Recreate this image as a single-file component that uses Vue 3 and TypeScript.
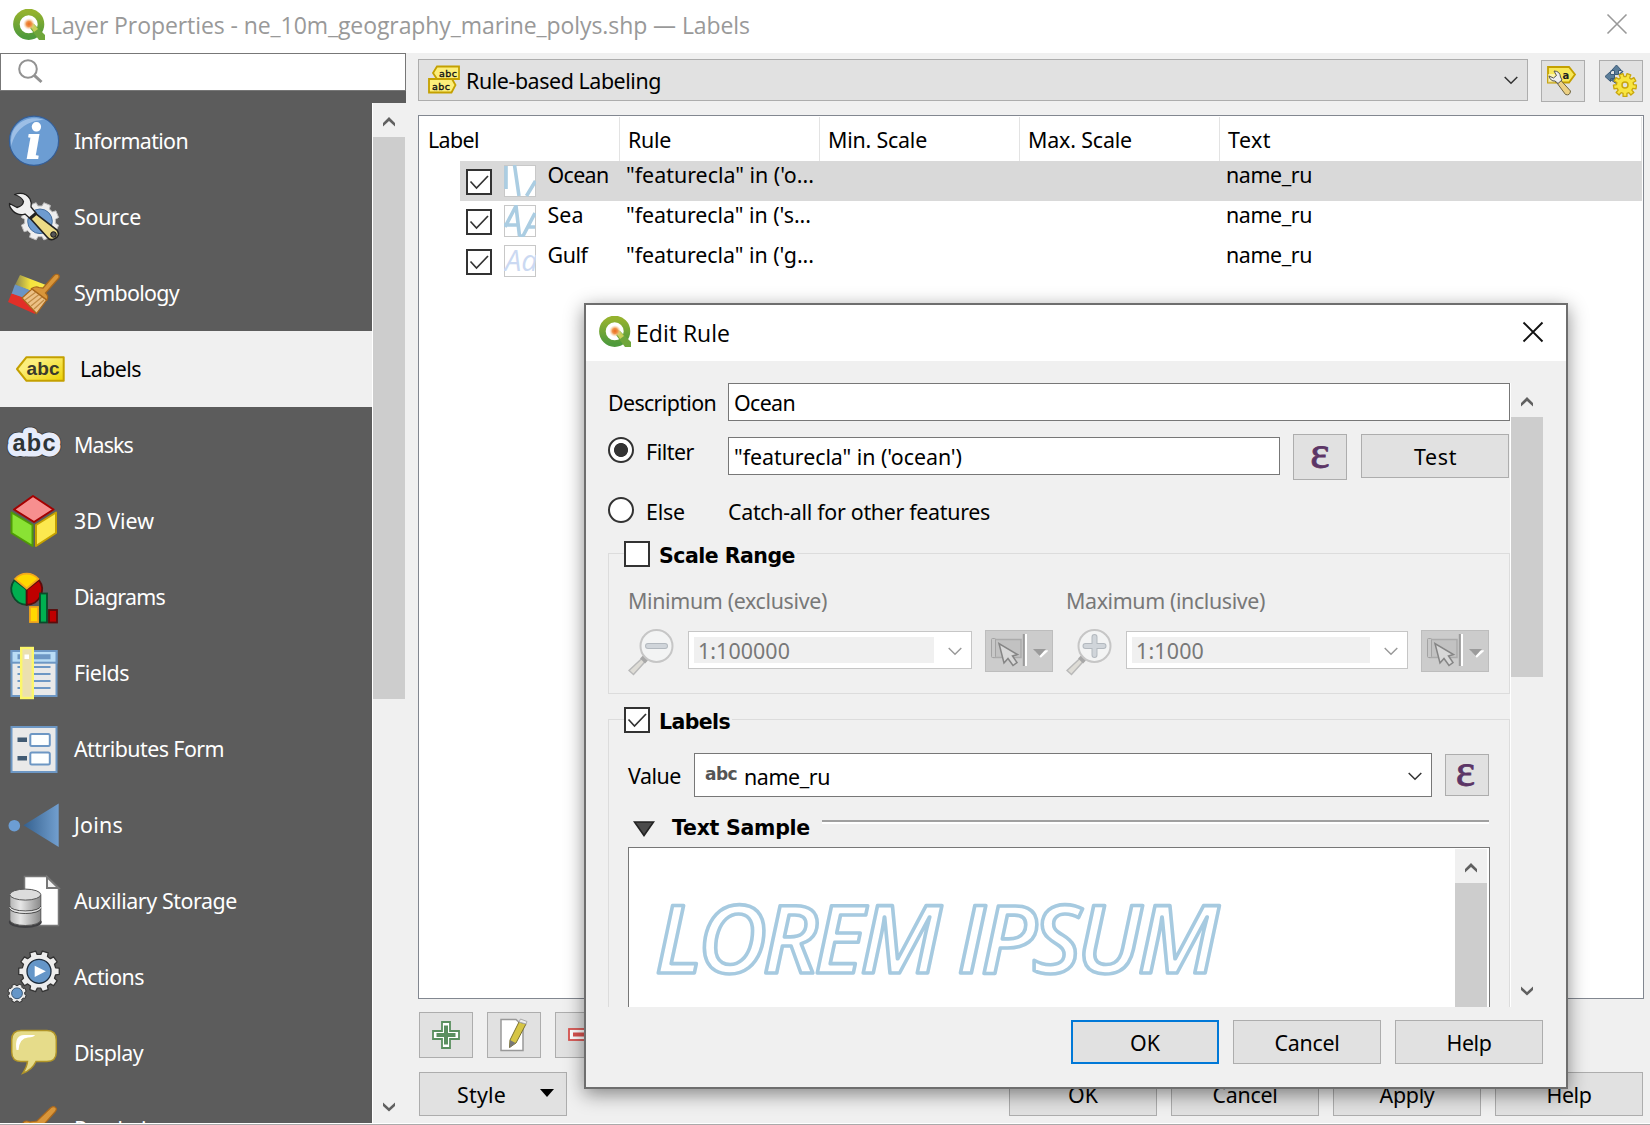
<script setup lang="ts">
import type { Directive } from 'vue'

// Tightens letter spacing so a caption occupies its nominal width.
const vFit: Directive<HTMLElement, number> = {
  mounted(el, { value }) {
    const n = (el.textContent ?? '').trim().length
    if (!n) return
    const natural = el.getBoundingClientRect().width
    el.style.letterSpacing = `${((value - natural) / n).toFixed(3)}px`
  },
}

function gear(cx: number, cy: number, ro: number, ri: number, teeth: number): string {
  const pts: string[] = []
  const step = (Math.PI * 2) / teeth
  for (let i = 0; i < teeth; i++) {
    const a = i * step - Math.PI / 2 + step / 2
    const put = (r: number, d: number) =>
      pts.push(`${(cx + r * Math.cos(a + d * step)).toFixed(2)} ${(cy + r * Math.sin(a + d * step)).toFixed(2)}`)
    put(ri, -0.33)
    put(ro, -0.24)
    put(ro, 0.24)
    put(ri, 0.33)
  }
  return `M${pts.join('L')}Z`
}

interface NavItem { id: string; label: string; w: number }
const nav: NavItem[] = [
  { id: 'info', label: 'Information', w: 114 },
  { id: 'source', label: 'Source', w: 67 },
  { id: 'symbology', label: 'Symbology', w: 105 },
  { id: 'labels', label: 'Labels', w: 61 },
  { id: 'masks', label: 'Masks', w: 59 },
  { id: 'view3d', label: '3D View', w: 80 },
  { id: 'diagrams', label: 'Diagrams', w: 91 },
  { id: 'fields', label: 'Fields', w: 55 },
  { id: 'form', label: 'Attributes Form', w: 150 },
  { id: 'joins', label: 'Joins', w: 49 },
  { id: 'aux', label: 'Auxiliary Storage', w: 163 },
  { id: 'actions', label: 'Actions', w: 70 },
  { id: 'display', label: 'Display', w: 69 },
  { id: 'rendering', label: 'Rendering', w: 96 },
]

const rules = [
  { name: 'Ocean', w: 61, rule: '"featurecla" in (\'o...', rw: 188, sel: true },
  { name: 'Sea', w: 36, rule: '"featurecla" in (\'s...', rw: 185, sel: false },
  { name: 'Gulf', w: 40, rule: '"featurecla" in (\'g...', rw: 188, sel: false },
]

const scales = [
  { title: 'Minimum (exclusive)', tw: 199, value: '1:100000', vw: 92, plus: false },
  { title: 'Maximum (inclusive)', tw: 199, value: '1:1000', vw: 68, plus: true },
]
</script>

<template>
  <div class="app">
    <header class="titlebar">
      <svg class="logo" width="32" height="32" viewBox="0 0 32 32">
        <defs>
          <linearGradient id="qg" x1="0" y1="0" x2="0" y2="1"><stop offset="0" stop-color="#94b22e" /><stop offset="1" stop-color="#4f9a3c" /></linearGradient>
          <radialGradient id="qo"><stop offset="0" stop-color="#ea6a1c" /><stop offset=".45" stop-color="#f0924a" /><stop offset="1" stop-color="#f9dfb4" stop-opacity="0" /></radialGradient>
        </defs>
        <circle cx="15.700" cy="15.300" r="12.300" fill="none" stroke="url(#qg)" stroke-width="6.600" />
        <path d="M17 19L21 15L32 26V31H26Z" fill="#6fa63a" />
        <path d="M16 15L20 14L25 20L21 23Z" fill="#c9cf58" />
        <circle cx="16" cy="15" r="6" fill="url(#qo)" />
      </svg>
      <span v-fit="700" class="wintitle">Layer Properties - ne_10m_geography_marine_polys.shp — Labels</span>
      <svg class="winclose" width="22" height="22" viewBox="0 0 22 22"><path d="M1.500 1.500L20.500 20.500M20.500 1.500L1.500 20.500" stroke="#999" stroke-width="1.600" /></svg>
    </header>

    <div class="body">
      <aside class="side">
        <div class="search">
          <svg width="28" height="28" viewBox="0 0 28 28" fill="none" stroke="#929292"><circle cx="11" cy="11" r="8.800" stroke-width="2" /><path d="M17.300 17.300L24.500 24" stroke-width="3" /></svg>
        </div>
        <div class="navwrap">
          <nav class="nav">
            <div v-for="it in nav" :key="it.id" class="item" :class="{ on: it.id === 'labels' }">
              <svg class="ico" width="68" height="76" viewBox="0 0 68 76">
                <g v-if="it.id === 'info'">
                  <circle cx="34" cy="37.700" r="24.600" fill="#6c9dd3" stroke="#355f98" stroke-width="1.200" />
                  <path d="M11.500 43C8 22 27 11 44 17C30 17 15 25 11.500 43Z" fill="#9dbfe6" />
                  <text x="33.500" y="54.500" text-anchor="middle" font-family="Liberation Serif" font-weight="bold" font-style="italic" font-size="50" fill="#fff" stroke="#fff" stroke-width="1.800">i</text>
                </g>
                <g v-else-if="it.id === 'source'">
                  <path :d="gear(40, 42.3, 19, 15.5, 8)" fill="#eee" stroke="#bbb" stroke-width="1" stroke-linejoin="round" />
                  <circle cx="40" cy="42.300" r="12.300" fill="#6e9bcf" stroke="#456f9f" />
                  <path d="M30 39L35 34L57 51Q61 57 54 60Q50 62 47 58Z" fill="#ecdb86" stroke="#222" stroke-width="1.600" />
                  <circle cx="53.500" cy="55.500" r="2.800" fill="#555" stroke="#111" />
                  <path d="M14.500 15.500Q25 12 30 20Q32 24 31 28L36 34L30 39.500L25 35Q18 37 13 32Q9 28 9.500 24.500L17 28.500Q23 27 23.500 22.500Q22 18 14.500 15.500Z" fill="#f0f0f0" stroke="#222" stroke-width="1.300" stroke-linejoin="round" />
                  <path d="M30 39.500L36.500 34" stroke="#222" stroke-width="3" />
                </g>
                <g v-else-if="it.id === 'symbology'">
                  <defs><linearGradient id="fy"><stop offset="0" stop-color="#8a8550" /><stop offset=".5" stop-color="#f6e43c" /><stop offset="1" stop-color="#f6ea50" /></linearGradient></defs>
                  <path d="M20 20L46 30L42 40L15 30Z" fill="url(#fy)" />
                  <path d="M15 29.500L40 39L36 48L11.500 39Z" fill="#6a94c4" />
                  <path d="M11.500 38.500L36 47L35 59L8 47Z" fill="#e22f28" />
                  <path d="M22 43L32 34L46.500 45L36.500 58.500Z" fill="#ecc186" stroke="#a8671c" stroke-width="1.200" />
                  <path d="M25 45L36 37M28 48L39 39.500M31 51L42 42M34 54L44 45" stroke="#c08b45" stroke-width="1.200" />
                  <path d="M31.500 33.500Q36 31 39 32.500L43 33L54 20.500Q57 18 59 20.500Q60 22.500 57 25L45.500 38Q49 41 47 45Z" fill="#d9963a" stroke="#a8671c" stroke-width="1.200" />
                </g>
                <g v-else-if="it.id === 'labels'">
                  <defs><linearGradient id="lt" x1="0" y1="0" x2="1" y2="1"><stop offset=".3" stop-color="#fcef7c" /><stop offset="1" stop-color="#edd200" /></linearGradient></defs>
                  <path d="M17 38L26.500 26.200H63.700V49.800H26.500Z" fill="url(#lt)" stroke="#c4a000" stroke-width="2" stroke-linejoin="round" />
                  <text x="26.500" y="43.700" font-family="Liberation Sans" font-weight="bold" font-size="19" textLength="33" fill="#3a3a2c">abc</text>
                </g>
                <g v-else-if="it.id === 'masks'" font-family="Liberation Sans" font-weight="bold" font-size="23.500" stroke-linejoin="round">
                  <text x="12.500" y="43.500" textLength="43" fill="#2a3440" stroke="#333" stroke-width="12.500">abc</text>
                  <text x="12.500" y="43.500" textLength="43" fill="#e6ecfb" stroke="#e6ecfb" stroke-width="11">abc</text>
                  <text x="12.500" y="43.500" textLength="43" fill="#2d3436">abc</text>
                </g>
                <g v-else-if="it.id === 'view3d'" stroke-width="2" stroke-linejoin="round">
                  <path d="M33 13L53.500 26.500L34 39L14 26.500Z" fill="#f78f8f" stroke="#a40000" />
                  <path d="M11.500 29.500L32.500 42V63L11.500 50Z" fill="#8ae234" stroke="#4e9a06" />
                  <path d="M56 29.500L36 42V63L56 50Z" fill="#fce94f" stroke="#c4a000" />
                </g>
                <g v-else-if="it.id === 'diagrams'" stroke-width="1.800">
                  <path d="M26.700 30.500L14.500 21A15.500 15.500 0 0 0 26.700 45.800Z" fill="#00b050" stroke="#0a4a2a" />
                  <path d="M26.700 30.500L38.900 21A15.500 15.500 0 0 1 26.700 45.800Z" fill="#c00000" stroke="#5a0c0c" />
                  <path d="M26.700 29.500L15 20A15.500 15.500 0 0 1 38.400 20Z" fill="#ffd800" stroke="#f3a71c" />
                  <rect x="30" y="48" width="8" height="15" fill="#ffd800" stroke="#f3a71c" />
                  <rect x="40" y="34.500" width="7" height="29" fill="#00b050" stroke="#0a4a2a" />
                  <rect x="49" y="51" width="8" height="12.500" fill="#c00000" stroke="#5a0c0c" />
                </g>
                <g v-else-if="it.id === 'fields'">
                  <rect x="11.500" y="16" width="45" height="45" fill="#e9e9e9" stroke="#6d97c4" stroke-width="2" />
                  <rect x="11.500" y="16" width="45" height="11.700" fill="#b9dcf5" stroke="#6d97c4" stroke-width="2" />
                  <path d="M17.500 32H50.500M17.500 39H50.500M17.500 46H50.500M17.500 53H50.500" stroke="#6d97c4" stroke-width="2" />
                  <path d="M17.500 21.800H50.500" stroke="#6d97c4" stroke-width="5" />
                  <rect x="21.200" y="13" width="11.600" height="50" fill="#ebe0b0" stroke="#fcf769" stroke-width="2.400" />
                  <rect x="24.500" y="19.500" width="4.500" height="4.500" fill="#fff" />
                </g>
                <g v-else-if="it.id === 'form'">
                  <rect x="11.500" y="16" width="45" height="45" fill="#e9e9e9" stroke="#6d97c4" stroke-width="2" />
                  <path d="M17.500 28.700H27M17.500 47.300H27" stroke="#415a72" stroke-width="4.500" />
                  <rect x="30.300" y="23" width="19.500" height="12" rx="1.500" fill="#fdffff" stroke="#6d97c4" stroke-width="2" />
                  <rect x="30.300" y="41.500" width="19.500" height="12" rx="1.500" fill="#fdffff" stroke="#6d97c4" stroke-width="2" />
                </g>
                <g v-else-if="it.id === 'joins'">
                  <defs><linearGradient id="jt"><stop offset="0" stop-color="#35618f" /><stop offset="1" stop-color="#729fcf" /></linearGradient></defs>
                  <circle cx="14.300" cy="38.700" r="5.800" fill="#6c9dd3" />
                  <path d="M23.500 38.300L58.700 16.500V60Z" fill="url(#jt)" />
                </g>
                <g v-else-if="it.id === 'aux'">
                  <defs><linearGradient id="cy"><stop offset="0" stop-color="#b5b5b5" /><stop offset=".35" stop-color="#e6e6e6" /><stop offset="1" stop-color="#888" /></linearGradient></defs>
                  <path d="M24.500 13.500H47L58.500 25V62.500H24.500Z" fill="#fff" stroke="#777" stroke-width="1.500" />
                  <path d="M47 14V25H58.500Z" fill="#f2f2f2" stroke="#777" stroke-width="2" />
                  <ellipse cx="25.300" cy="59" rx="16.500" ry="6" fill="#3f3f42" />
                  <path d="M9.800 32V57A15.500 5.500 0 0 0 40.800 57V32Z" fill="url(#cy)" stroke="#555" />
                  <ellipse cx="25.300" cy="31.600" rx="15.500" ry="5.500" fill="#dcdcdc" stroke="#555" />
                  <path d="M9.800 43A15.500 5 0 0 0 40.800 43M9.800 45.500A15.500 5 0 0 0 40.800 45.500" fill="none" stroke="#4a4a4a" />
                  <path d="M9.800 44.200A15.500 5 0 0 0 40.800 44.200" fill="none" stroke="#eee" />
                </g>
                <g v-else-if="it.id === 'actions'" stroke-linejoin="round">
                  <path :d="gear(39, 32.3, 20.5, 17, 10)" fill="#ededed" stroke="#333" stroke-width="1.300" />
                  <circle cx="39" cy="32.300" r="12" fill="#6596c8" stroke="#1d2c3c" stroke-width="1.300" />
                  <path d="M34.700 26.800L45.800 32.300L34.700 38Z" fill="#fff" />
                  <path :d="gear(17, 54.3, 9.4, 7.8, 8)" fill="#ededed" stroke="#333" />
                  <circle cx="17" cy="54.300" r="5.400" fill="#6596c8" stroke="#1d3c5c" stroke-width=".8" />
                </g>
                <g v-else-if="it.id === 'display'">
                  <path d="M21 15.500H47Q56.300 15.500 56.300 25V37Q56.300 46.500 47 46.500H36Q32 55 22.700 58.300Q27 52 27.500 46.500H21Q11.700 46.500 11.700 37V25Q11.700 15.500 21 15.500Z" fill="#e6dc8a" stroke="#b09428" stroke-width="1.500" />
                  <path d="M16.500 35Q14 18.500 26 20H35Q34 22 28 22.500Q19.500 23 18.500 35Z" fill="#fff" />
                </g>
                <g v-else>
                  <path d="M22 34Q24 28 30 31L37 30L51 16.500Q54 14.500 56 17Q57 19 55 21L38 40Z" fill="#d9963a" stroke="#a8671c" stroke-width="1.200" />
                </g>
              </svg>
              <span v-fit="it.w" class="lbl">{{ it.label }}</span>
            </div>
          </nav>
          <div class="sb">
            <svg width="12" height="10" viewBox="0 0 12 10"><path d="M0 6L6 0L12 6V9.500L6 4L0 9.500Z" fill="#606060" /></svg>
            <div class="thumb" />
            <svg class="dn" width="12" height="10" viewBox="0 0 12 10"><path d="M0 4L6 9.500L12 4V.5L6 6L0 .5Z" fill="#606060" /></svg>
          </div>
        </div>
      </aside>

      <main class="main">
        <div class="toprow">
          <div class="mode">
            <svg width="34" height="30" viewBox="0 0 34 30">
              <path d="M5 8L9 1.500H31V14H9Z" fill="#fcee7a" stroke="#c4a000" stroke-width="1.800" />
              <path d="M1 14H24L27.500 20L23.500 27.500H1Z" fill="#fcee7a" stroke="#c4a000" stroke-width="1.800" />
              <g font-family="DejaVu Sans" font-size="9.500" fill="#111" stroke="#111" stroke-width=".35"><text x="11" y="11.800" textLength="18">abc</text><text x="4" y="24.500" textLength="18">abc</text></g>
            </svg>
            <span v-fit="195">Rule-based Labeling</span>
            <svg class="chev" width="14" height="9" viewBox="0 0 14 9"><path d="M.7 1L7 7.300L13.300 1" fill="none" stroke="#333" stroke-width="1.500" /></svg>
          </div>
          <div class="tool">
            <svg width="32" height="32" viewBox="0 0 32 32">
              <path d="M2 2H23L29 9.500L23 17.500H2Z" fill="#f8e85a" stroke="#c4a000" stroke-width="1.800" />
              <path d="M2 17.500V9H9V17.500Z" fill="#fff" opacity=".5" />
              <text x="16.500" y="14" font-family="DejaVu Sans" font-weight="bold" font-size="10" fill="#222">a</text>
              <path d="M11 18L14.500 15L24.500 26Q24 31 19.500 29.500Z" fill="#ecd083" stroke="#6d6340" />
              <path d="M8 6Q14 6 14.500 12L16 15L12 18.500L9 16Q4.500 16.500 3 11L7.500 13L10.500 10.500Z" fill="#eee" stroke="#555" />
            </svg>
          </div>
          <div class="tool t2">
            <svg width="32" height="32" viewBox="0 0 32 32">
              <path d="M11.500 0L16.500 5.500H13.500V9.500H9.500V5.500H6.500ZM0 11.500L5.500 6.500V9.500H9.500V13.500H5.500V16.500ZM6 15L11 13L12 19Z" fill="#5b7d99" stroke="#3a5a78" stroke-width="1" />
              <path d="M5.500 6.500L7 5.500M14 10L18 6" stroke="#3a5a78" stroke-width="1.500" />
              <path :d="gear(20, 20, 11.6, 8.5, 9)" fill="#f8e540" stroke="#c9a60c" stroke-width="1.300" stroke-linejoin="round" />
              <circle cx="20" cy="20" r="3" fill="#e1e1e1" stroke="#c9a60c" stroke-width="1.500" />
            </svg>
          </div>
        </div>

        <div class="tree">
          <div class="thead">
            <div class="c0"><span v-fit="51">Label</span></div>
            <div><span v-fit="43">Rule</span></div>
            <div><span v-fit="99">Min. Scale</span></div>
            <div><span v-fit="104">Max. Scale</span></div>
            <div class="c4"><span v-fit="43">Text</span></div>
          </div>
          <div v-for="r in rules" :key="r.name" class="trow" :class="{ sel: r.sel }">
            <span class="cb"><svg width="22" height="22" viewBox="0 0 22 22"><path d="M2.500 10.500L8.500 17L20 5" fill="none" stroke="#333" stroke-width="1.700" /></svg></span>
            <svg class="prev" width="32" height="32" viewBox="0 0 32 32">
              <rect x=".5" y=".5" width="31" height="31" fill="#fff" stroke="#c8c8c8" />
              <g fill="none" stroke="#abcde2" stroke-width="3.600">
                <path v-if="r.name === 'Ocean'" d="M2 1V24M10.500 0L15 31M22.500 31L31.500 16" />
                <path v-else-if="r.name === 'Sea'" d="M1 22L12 1L15.500 31M0 20H14M15 31H19L31 8M24 22H31" />
                <text v-else x="1" y="26" font-family="Open Sans" font-style="italic" font-size="29" fill="#cbd9f2" stroke="none">Aa</text>
              </g>
            </svg>
            <span class="rn"><span v-fit="r.w">{{ r.name }}</span></span>
            <span class="rr"><span v-fit="r.rw">{{ r.rule }}</span></span>
            <span v-fit="86">name_ru</span>
          </div>
        </div>

        <div class="acts">
          <div class="act"><svg width="28" height="28" viewBox="0 0 28 28"><path d="M10 1H18V10H27V18H18V27H10V18H1V10H10Z" fill="#fff" stroke="#5a8f5f" stroke-width="1.800" /><path d="M14 4.500V23.500M4.500 14H23.500" stroke="#5a8f5f" stroke-width="4" /></svg></div>
          <div class="act">
            <svg width="30" height="34" viewBox="0 0 30 34"><path d="M2 1.500H17L24 8V32.500H2Z" fill="#fff" stroke="#999" stroke-width="1.500" /><path d="M20 4L27 6L17 25L10.500 29.500L11 22Z" fill="#d6c545" stroke="#7a7130" /><path d="M20 4L21.500 1L28 3.500L27 6Z" fill="#eee" stroke="#aaa" /><path d="M11 22L16.500 25L10.500 30Z" fill="#777" /></svg>
          </div>
          <div class="act"><svg width="28" height="14" viewBox="0 0 28 14"><rect x="1" y="1" width="26" height="11" fill="#fff" stroke="#d9534f" stroke-width="1.800" /><path d="M5 6.500H23" stroke="#d9534f" stroke-width="4" /></svg></div>
        </div>

        <div class="foot">
          <div class="btn style"><span v-fit="49">Style</span><svg width="14" height="8" viewBox="0 0 14 8"><path d="M0 0H14L7 8Z" /></svg></div>
          <div class="btn"><span v-fit="30">OK</span></div>
          <div class="btn"><span v-fit="65">Cancel</span></div>
          <div class="btn"><span v-fit="55">Apply</span></div>
          <div class="btn"><span v-fit="45">Help</span></div>
        </div>
      </main>
    </div>
    <div class="edge" />

    <section class="dialog">
      <header class="dtitle">
        <svg class="logo" width="32" height="32" viewBox="0 0 32 32">
          <circle cx="15.700" cy="15.300" r="12.300" fill="none" stroke="url(#qg)" stroke-width="6.600" />
          <path d="M17 19L21 15L32 26V31H26Z" fill="#6fa63a" />
          <path d="M16 15L20 14L25 20L21 23Z" fill="#c9cf58" />
          <circle cx="16" cy="15" r="6" fill="url(#qo)" />
        </svg>
        <span v-fit="94" class="wintitle">Edit Rule</span>
        <svg class="winclose" width="22" height="22" viewBox="0 0 22 22"><path d="M1.500 1.500L20.500 20.500M20.500 1.500L1.500 20.500" stroke="#111" stroke-width="1.900" /></svg>
      </header>

      <div class="dscroll">
        <div class="dcontent">
          <div class="frow desc">
            <span class="fl"><span v-fit="108">Description</span></span>
            <div class="input"><span v-fit="61">Ocean</span></div>
          </div>
          <div class="frow filt">
            <span class="radio on" />
            <span class="rl"><span v-fit="48">Filter</span></span>
            <div class="input"><span v-fit="228">"featurecla" in ('ocean')</span></div>
            <div class="btn eps">ε</div>
            <div class="btn test"><span v-fit="43">Test</span></div>
          </div>
          <div class="frow els">
            <span class="radio" />
            <span class="rl"><span v-fit="39">Else</span></span>
            <span v-fit="262">Catch-all for other features</span>
          </div>

          <div class="group g1">
            <div class="legend"><span class="cb" /><b v-fit="136">Scale Range</b></div>
            <div class="scales">
              <div v-for="s in scales" :key="s.title" class="scale">
                <div class="st"><span v-fit="s.tw">{{ s.title }}</span></div>
                <div class="srow">
                  <svg width="46" height="48" viewBox="0 0 46 48">
                    <path d="M1 41.500L16.500 27L19.500 30L5.500 45.500Z" fill="#dedcd6" stroke="#b9b9b9" stroke-width="1.500" />
                    <path d="M13.500 28L18.500 33" stroke="#a8a8a8" stroke-width="4" />
                    <circle cx="28.500" cy="17" r="16" fill="#f3f4f4" stroke="#c6c6c6" stroke-width="2" />
                    <path :d="s.plus ? 'M28.500 8V26M19.500 17H37.500' : 'M20 17H37'" stroke="#b3b9bf" stroke-width="6" stroke-linecap="round" />
                    <path :d="s.plus ? 'M28.500 8V26M19.500 17H37.500' : 'M20 17H37'" stroke="#d0d5da" stroke-width="4" stroke-linecap="round" />
                  </svg>
                  <div class="scombo">
                    <span class="sv"><span v-fit="s.vw">{{ s.value }}</span></span>
                    <svg width="14" height="9" viewBox="0 0 14 9"><path d="M.7 1L7 7.300L13.300 1" fill="none" stroke="#999" stroke-width="1.400" /></svg>
                  </div>
                  <svg class="mapbtn" width="68" height="42" viewBox="0 0 68 42">
                    <rect x=".5" y=".5" width="67" height="41" fill="#ccc" stroke="#bdbdbd" />
                    <rect x="9" y="9.500" width="27" height="18" fill="#c2c2c2" stroke="#ababab" stroke-width="1.500" />
                    <rect x="6.500" y="8.500" width="4" height="19" rx="1" fill="#c8c8c8" stroke="#a3a3a3" />
                    <path d="M14 13.500L19 33L23 28.500L28 35.500L32 32.500L27.500 26L32.500 24.500Z" fill="#d8d8d8" stroke="#858585" stroke-width="1.500" />
                    <path d="M38.800 4V36" stroke="#9b9b9b" stroke-width="2" /><path d="M41 4V36" stroke="#fff" stroke-width="2" />
                    <path d="M49 20L55 27L62 20.500V19.500Z" fill="#fff" transform="translate(.8 .8)" /><path d="M48 19H61L54.500 26Z" fill="#9b9b9b" />
                  </svg>
                </div>
              </div>
            </div>
          </div>

          <div class="group g2">
            <div class="legend"><span class="cb"><svg width="22" height="22" viewBox="0 0 22 22"><path d="M2.500 10.500L8.500 17L20 5" fill="none" stroke="#333" stroke-width="1.700" /></svg></span><b v-fit="71">Labels</b></div>
            <div class="vrow">
              <span class="vl"><span v-fit="53">Value</span></span>
              <div class="vcombo">
                <b v-fit="32" class="abc">abc</b>
                <span v-fit="86" class="vt">name_ru</span>
                <svg width="14" height="9" viewBox="0 0 14 9"><path d="M.7 1L7 7.300L13.300 1" fill="none" stroke="#333" stroke-width="1.500" /></svg>
              </div>
              <div class="btn eps">ε</div>
            </div>
            <div class="ts">
              <svg width="22" height="16" viewBox="0 0 22 16"><path d="M1.500 1H20.500L11 14.500Z" fill="#4a4a4a" stroke="#222" stroke-width="1.600" /></svg>
              <b v-fit="138">Text Sample</b><i />
            </div>
            <div class="sample">
              <div class="lorem"><svg width="600" height="100" viewBox="0 0 600 100"><text x="0" y="81" textLength="564" font-family="Open Sans" font-style="italic" font-weight="600" font-size="95" fill="#fff" stroke="#a6cae0" stroke-width="3.600" stroke-linejoin="round">LOREM IPSUM</text></svg></div>
              <div class="isb"><svg width="12" height="10" viewBox="0 0 12 10"><path d="M0 6L6 0L12 6V9.500L6 4L0 9.500Z" fill="#606060" /></svg><div /></div>
            </div>
          </div>
        </div>
        <div class="sb dsb">
          <svg width="12" height="10" viewBox="0 0 12 10"><path d="M0 6L6 0L12 6V9.500L6 4L0 9.500Z" fill="#606060" /></svg>
          <div class="thumb" />
          <svg class="dn" width="12" height="10" viewBox="0 0 12 10"><path d="M0 4L6 9.500L12 4V.5L6 6L0 .5Z" fill="#606060" /></svg>
        </div>
      </div>
      <div class="dfoot">
        <div class="btn primary"><span v-fit="30">OK</span></div>
        <div class="btn"><span v-fit="65">Cancel</span></div>
        <div class="btn"><span v-fit="45">Help</span></div>
      </div>
    </section>
  </div>
</template>

<style>
body { margin: 0; overflow: hidden; }
</style>

<style scoped>
* { box-sizing: border-box; }
.app { position: relative; width: 1650px; height: 1125px; overflow: hidden; display: flex; flex-direction: column; background: #f0f0f0; color: #000; font: 21.4px/30px "Noto Sans", sans-serif; }
.app span, .app b { white-space: nowrap; }
svg { display: block; flex: none; }
.titlebar { height: 53px; flex: none; display: flex; align-items: flex-start; background: #fff; color: #999; padding: 9px 22px 0 13px; }
.wintitle { font: 23px/34px "Open Sans", sans-serif; margin-left: 5px; }
.titlebar .wintitle { line-height: 33px; }
.winclose { margin-left: auto; margin-top: 4px; }
.body { flex: 1; min-height: 0; display: flex; }
.side { width: 406px; flex: none; display: flex; flex-direction: column; background: #5c5c5c; }
.search { height: 38px; flex: none; background: #fff; border: 1px solid #777; padding: 4px 16px; }
.navwrap { display: flex; margin-top: 12px; flex: 1; min-height: 0; background: #5c5c5c; }
.nav { width: 372px; overflow: hidden; }
.item { height: 76px; display: flex; align-items: center; color: #fff; }
.item .ico { margin-right: 6px; }
.item.on { background: #f0f0f0; color: #000; }
.item.on .ico { margin-right: 12px; }
.sb { width: 34px; border-left: 1px solid #fff; border-right: 1px solid #f0f0f0; background: #f0f0f0; display: flex; flex-direction: column; align-items: center; }
.sb > svg { margin-top: 14px; }
.sb .thumb { width: 32px; height: 562px; background: #cdcdcd; margin: 10px 0 auto; }
.sb .dn { margin: 0 0 11px; }
.main { flex: 1; display: flex; flex-direction: column; padding: 6px 6px 0 12px; }
.toprow { display: flex; align-items: flex-start; height: 56px; flex: none; }
.mode { width: 1110px; height: 42px; border: 1px solid #adadad; background: #e1e1e1; display: flex; align-items: center; padding: 0 9px 0 9px; }
.mode > span { margin-left: 4px; padding-top: 1px; }
.chev { margin-left: auto; }
.tool { width: 44px; height: 42px; margin: 1px 0 0 13px; border: 1px solid #adadad; background: #e1e1e1; display: flex; align-items: center; justify-content: center; padding-right: 2px; }
.t2 { margin-left: 14px; padding: 0; }
.tree { height: 884px; width: 1226px; flex: none; border: 1px solid #828790; background: #fff; padding: 1px; }
.thead { display: flex; height: 44px; line-height: 46px; }
.thead > div { width: 200px; flex: none; padding-left: 8px; border-right: 1px solid #e3e3e3; }
.thead .c4 { width: 422px; padding-left: 8px; }
.trow { height: 40px; display: flex; margin-left: 40px; padding-left: 6px; line-height: 28px; }
.trow.sel { background: #d9d9d9; }
.cb { width: 26px; height: 26px; border: 2px solid #333; background: #fff; flex: none; display: block; }
.trow .cb { margin-top: 8px; }
.prev { margin: 4px 0 0 12px; }
.rn { width: 90px; padding-left: 11.500px; flex: none; }
.rr { width: 600px; flex: none; }
.acts { display: flex; gap: 14px; margin: 13px 0 0 1px; }
.act { width: 54px; height: 46px; border: 1px solid #adadad; background: #e1e1e1; display: flex; align-items: center; justify-content: center; }
.foot { display: flex; margin: 14px 0 0 1px; gap: 14px; }
.btn { width: 148px; height: 44px; flex: none; border: 1px solid #adadad; background: #e1e1e1; text-align: center; line-height: 44px; }
.style { display: flex; margin-right: 428px; padding-left: 37px; }
.style svg { margin: 16px 0 0 34px; }
.edge { height: 2px; flex: none; background: #aaa; border-top: 1px solid #fff; }

.dialog { position: absolute; left: 584px; top: 303px; width: 984px; height: 786px; background: #f0f0f0; border: 2px solid #6e6e6e; box-shadow: 0 5px 18px rgba(0, 0, 0, .45); }
.dtitle { height: 56px; background: #fff; display: flex; align-items: flex-start; padding: 11px 22px 0 13px; }
.dtitle .wintitle { margin: 0 0 0 5px; }
.dtitle .winclose { margin-top: 5px; }
.dscroll { margin: 22px 0 0 22px; display: flex; height: 624px; }
.dcontent { width: 902px; overflow: hidden; }
.dsb { width: 34px; }
.dsb .thumb { height: 260px; }
.frow { display: flex; }
.fl { width: 120px; line-height: 39px; }
.input { border: 1px solid #777; background: #fff; height: 38px; line-height: 38px; padding-left: 5px; }
.desc .input { width: 782px; }
.filt { margin-top: 12px; height: 60px; align-items: flex-start; }
.radio { width: 26px; height: 26px; border: 2px solid #333; border-radius: 50%; background: #fff; flex: none; }
.radio.on { background: radial-gradient(circle, #333 6.600px, #fff 7.400px); }
.filt .radio { margin-top: 3px; }
.rl { width: 94px; padding-left: 12px; flex: none; line-height: 36px; }
.filt .input { width: 552px; margin-top: 3px; line-height: 37px; }
.eps { font: 46px/35px "Liberation Serif", serif; color: #5c3566; -webkit-text-stroke: .8px #5c3566; }
.filt .eps { width: 54px; height: 46px; margin-left: 13px; }
.test { margin-left: 14px; padding-left: 1px; }
.els { height: 44px; margin-top: 2px; line-height: 30px; padding-top: 1px; }
.els .rl { line-height: 30px; }
.group { position: relative; border: 1px solid #dcdcdc; width: 902px; }
.g1 { height: 141px; margin-top: 13px; }
.legend { position: absolute; top: -13px; left: 15px; height: 26px; display: flex; background: #f0f0f0; padding-right: 2px; }
.legend b { margin-left: 9px; line-height: 30px; }
.group b { font-family: "DejaVu Sans", sans-serif; font-size: 20.500px; }
.scales { display: flex; padding: 30px 0 0 19px; }
.scale { width: 438px; }
.st { color: #787878; height: 45px; line-height: 34px; }
.srow { display: flex; }
.scombo { width: 284px; height: 38px; border: 1px solid #c6c6c6; background: #fff; margin: 2px 0 0 14px; padding: 5px; display: flex; }
.sv { width: 240px; height: 26px; background: #f0f0f0; color: #787878; line-height: 27px; padding-left: 4px; }
.scombo svg { margin: 10px 0 0 14px; }
.mapbtn { margin: 1px 0 0 13px; }
.scale + .scale .scombo { width: 282px; }
.scale + .scale .sv { width: 238px; }
.g2 { height: 420px; margin-top: 25px; }
.vrow { display: flex; padding: 33px 0 0 19px; }
.vl { width: 66px; line-height: 46px; }
.vcombo { width: 738px; height: 44px; border: 1px solid #777; background: #fff; display: flex; padding-left: 10px; }
.group .abc { font-size: 17px; line-height: 41px; color: #555; }
.vt { margin-left: 7px; line-height: 45px; }
.vcombo svg { margin: 18px 9px 0 auto; }
.vrow .eps { width: 44px; height: 42px; margin: 1px 0 0 13px; line-height: 31px; padding-right: 3px; }
.ts { display: flex; margin: 12px 20px 0 24px; height: 36px; }
.ts svg { margin-top: 10px; }
.ts b { margin-left: 17px; line-height: 34px; }
.ts i { flex: 1; height: 4px; margin: 9px 0 0 12px; background: linear-gradient(#a0a0a0 50%, #fff 50%); }
.sample { margin-left: 19px; width: 862px; height: 240px; border: 1px solid #777; background: #fff; display: flex; }
.lorem { width: 826px; padding: 44px 0 0 26px; }
.isb { width: 34px; margin-top: 1px; background: #f0f0f0; border-right: 2px solid #fff; }
.isb svg { margin: 14px 0 10px 10px; }
.isb div { background: #cdcdcd; height: 205px; }
.dfoot { display: flex; justify-content: flex-end; gap: 14px; padding: 13px 23px 0 0; }
.primary { border: 2px solid #0078d7; line-height: 42px; }
</style>
